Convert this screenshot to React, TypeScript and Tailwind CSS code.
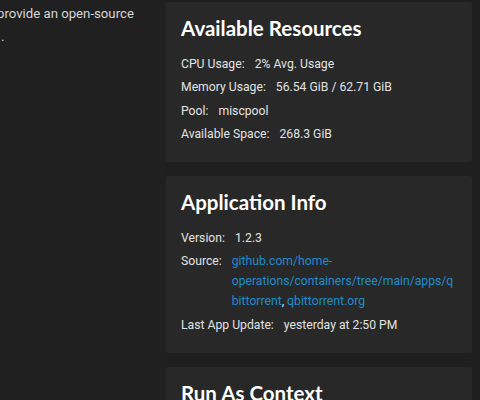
import React from 'react';

const body = { fontFamily: 'Roboto, "Noto Sans", sans-serif' };
const heading = { fontFamily: 'Lato, "Open Sans", sans-serif' };

type Row = { label: string; value: React.ReactNode };

function InfoCard({ title, rows }: { title: string; rows: Row[] }) {
  return (
    <section className="rounded-[2px] bg-[#282828] px-[15px] pb-[16px] pt-[12px]">
      <h2 className="text-[20.5px] font-bold leading-[28px] text-white" style={heading}>
        {title}
      </h2>
      <dl className="mt-[10px] text-[12.2px] leading-[20px] text-[#e2e2e2]" style={body}>
        {rows.map((row) => (
          <div key={row.label} className="flex gap-[10px] py-[1.75px]">
            <dt className="shrink-0">{row.label}</dt>
            <dd className="min-w-0 flex-1 break-words">{row.value}</dd>
          </div>
        ))}
      </dl>
    </section>
  );
}

export default function App() {
  const link = 'text-[#1d8ccf] hover:underline';

  return (
    <div className="flex h-[400px] w-[480px] overflow-hidden bg-[#1f1f1f]">
      <aside className="w-[166px] shrink-0 overflow-hidden bg-[#202020]">
        <p
          className="-ml-[3px] mt-[2px] text-[13.2px] leading-[23px] text-[#d6d6d6]"
          style={body}
        >
          provide an open-source
        </p>
        <p className="ml-[1px] text-[13.2px] leading-[23px] text-[#d6d6d6]" style={body}>
          .
        </p>
      </aside>

      <main className="flex w-[306px] flex-col gap-[14px] pt-[2px]">
        <InfoCard
          title="Available Resources"
          rows={[
            { label: 'CPU Usage:', value: '2% Avg. Usage' },
            { label: 'Memory Usage:', value: '56.54 GiB / 62.71 GiB' },
            { label: 'Pool:', value: 'miscpool' },
            { label: 'Available Space:', value: '268.3 GiB' },
          ]}
        />
        <InfoCard
          title="Application Info"
          rows={[
            { label: 'Version:', value: '1.2.3' },
            {
              label: 'Source:',
              value: (
                <>
                  <a className={link} href="#">
                    github.com/home-operations/containers/tree/main/apps/qbittorrent
                  </a>
                  ,{' '}
                  <a className={link} href="#">
                    qbittorrent.org
                  </a>
                </>
              ),
            },
            { label: 'Last App Update:', value: 'yesterday at 2:50 PM' },
          ]}
        />
        <InfoCard title="Run As Context" rows={[]} />
      </main>
    </div>
  );
}
